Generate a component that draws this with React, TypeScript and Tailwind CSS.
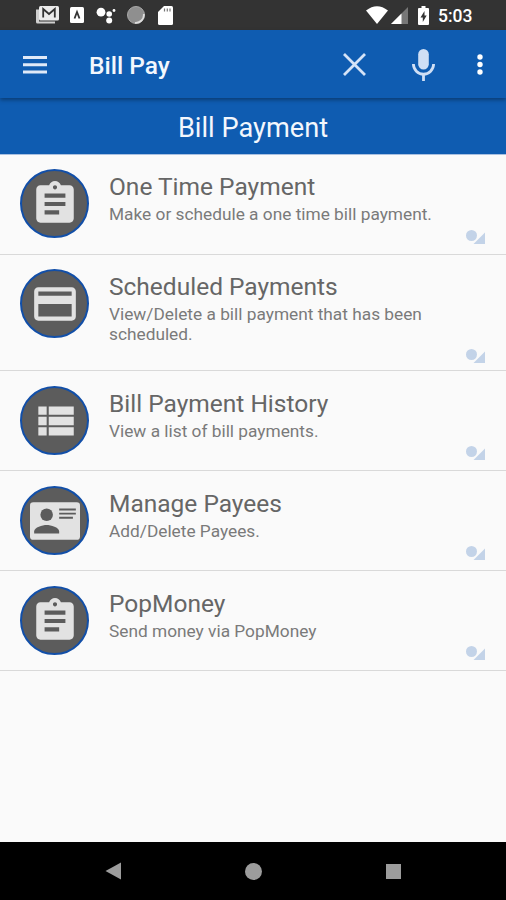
import React from 'react'

const AssignmentIcon = () => (
  <path d="M19 3h-4.18C14.4 1.84 13.3 1 12 1s-2.4.84-2.82 2H5c-1.1 0-2 .9-2 2v14c0 1.1.9 2 2 2h14c1.1 0 2-.9 2-2V5c0-1.1-.9-2-2-2zm-7 0c.55 0 1 .45 1 1s-.45 1-1 1-1-.45-1-1 .45-1 1-1zm2 14H7v-2h7v2zm3-4H7v-2h10v2zm0-4H7V7h10v2z" />
)

const CardIcon = () => (
  <path d="M20 4H4c-1.11 0-2 .89-2 2v12c0 1.11.89 2 2 2h16c1.11 0 2-.89 2-2V6c0-1.11-.89-2-2-2zm0 14H4v-6h16v6zm0-10H4V6h16v2z" />
)

const ListIcon = () => (
  <path d="M4 14h4v-4H4v4zm0 5h4v-4H4v4zM4 9h4V5H4v4zm5 5h12v-4H9v4zm0 5h12v-4H9v4zM9 5v4h12V5H9z" />
)

const ContactIcon = () => (
  <>
    <rect x="0" y="3" width="24" height="18" rx="1.6" />
    <g fill="#5c5c5c">
      <circle cx="8" cy="9" r="3" />
      <path d="M14 18H2v-1c0-2 4-3.1 6-3.1s6 1.1 6 3.1v1z" />
      <path d="M14 6h8v.9h-8zM14 8h8v.9h-8zM14 10h6.6v.9H14z" />
    </g>
  </>
)

const items = [
  {
    icon: <AssignmentIcon />,
    title: 'One Time Payment',
    text: 'Make or schedule a one time bill payment.',
    row: 'h-[100px] pt-[14px]',
    badge: 'bottom-[10px]',
  },
  {
    icon: <CardIcon />,
    title: 'Scheduled Payments',
    text: 'View/Delete a bill payment that has been scheduled.',
    row: 'h-[116px] pt-[14px]',
    badge: 'bottom-[7px]',
  },
  {
    icon: <ListIcon />,
    title: 'Bill Payment History',
    text: 'View a list of bill payments.',
    row: 'h-[100px] pt-[15px]',
    badge: 'bottom-[10px]',
  },
  {
    icon: <ContactIcon />,
    title: 'Manage Payees',
    text: 'Add/Delete Payees.',
    row: 'h-[100px] pt-[15px]',
    badge: 'bottom-[10px]',
  },
  {
    icon: <AssignmentIcon />,
    title: 'PopMoney',
    text: 'Send money via PopMoney',
    row: 'h-[100px] pt-[15px]',
    badge: 'bottom-[10px]',
  },
]

const StatusBar = () => (
  <div className="flex h-[30px] items-center bg-[#333333] pl-[35px] pr-[33px] text-white">
    {/* Notifications */}
    <svg className="h-5 w-6" viewBox="0 0 24 20">
      <path d="M1 4.500h3v12h16v2H2.500A1.500 1.500 0 0 1 1 17z" fill="#cfcfcf" />
      <rect x="4" y="1" width="20" height="14.500" rx="1.500" fill="#ececec" />
      <path d="M8.200 12.500V4l5.800 5 5.800-5v8.500" fill="none" stroke="#333" strokeWidth="1.800" />
    </svg>
    <svg className="ml-[11px] h-4 w-[14px]" viewBox="0 0 14 16">
      <rect width="14" height="16" rx="1.500" fill="#fff" />
      <path d="M4.500 11.500L7 5l2.500 6.500" fill="none" stroke="#333" strokeWidth="1.800" />
    </svg>
    <svg className="ml-[12px] h-5 w-5" viewBox="0 0 20 20" fill="#fff">
      <circle cx="5" cy="7.200" r="4.400" />
      <circle cx="13.200" cy="9" r="2.800" />
      <circle cx="13.200" cy="15.500" r="3" />
      <circle cx="18" cy="5.500" r="1.400" />
    </svg>
    <svg className="ml-[11px] h-[18px] w-[18px]" viewBox="0 0 18 18">
      <circle cx="9" cy="9" r="8.500" fill="#8f8f8f" stroke="#a8a8a8" />
      <path d="M16.800 8A8 8 0 0 1 8 16.800" fill="none" stroke="#ddd" strokeWidth="1.800" />
    </svg>
    <svg className="ml-[13px] h-[19px] w-[15px]" viewBox="0 0 15 19">
      <path d="M6 0h7.500A1.500 1.500 0 0 1 15 1.500v16a1.500 1.500 0 0 1-1.500 1.500h-12A1.500 1.500 0 0 1 0 17.500V6z" fill="#fff" />
      <path d="M6.500 2.500v3M9.300 2.500v3M12 2.500v3" stroke="#777" strokeWidth="1.200" />
    </svg>

    {/* System */}
    <svg className="ml-auto h-[18px] w-[22px]" viewBox="0 0 22 18">
      <path d="M0 4.500Q11-4 22 4.500L11 18z" fill="#fff" />
    </svg>
    <svg className="ml-[3px] h-[17px] w-[17px]" viewBox="0 0 17 17">
      <path d="M17 0v17H0z" fill="#777" />
      <path d="M10.500 6.500V17H0z" fill="#fff" />
    </svg>
    <svg className="ml-[10px] h-[19px] w-[11px]" viewBox="0 0 11 19">
      <path d="M3.500 0h4v2H10a1 1 0 0 1 1 1v15a1 1 0 0 1-1 1H1a1 1 0 0 1-1-1V3a1 1 0 0 1 1-1h2.500z" fill="#fff" />
      <path d="M6.500 5L2.500 11.500h2.300V16l3.900-6.500H6.500z" fill="#333" />
    </svg>
    <span className="ml-[9px] w-[35px] whitespace-nowrap pt-[3px] text-[17.5px] font-medium leading-none">5:03</span>
  </div>
)

const AppBar = () => (
  <header className="relative z-10 flex h-[68px] items-center bg-[#0f5cb1] pl-[23px] pr-[23px] pt-[1px] shadow-[0_2px_4px_rgba(0,0,0,0.35)]">
    <svg className="h-[18px] w-6" viewBox="0 0 24 18" fill="#dfe9f8">
      <path d="M0 0h24v3H0zM0 7.200h24v3H0zM0 14.500h24v3H0z" />
    </svg>
    <h1 className="ml-[42px] pt-[4px] text-[24.5px] font-medium leading-none text-[#f3f7fd]">Bill Pay</h1>
    <svg className="ml-auto h-[23px] w-[23px]" viewBox="0 0 23 23">
      <path d="M1 1l21 21M22 1L1 22" stroke="#d5e3f7" strokeWidth="2.800" />
    </svg>
    <svg className="ml-[46px] h-8 w-[23px]" viewBox="0 0 23 32">
      <rect x="6.200" y="0" width="10.600" height="20.500" rx="5.300" fill="#cfdff5" />
      <path d="M1.400 15a10.100 10.100 0 0 0 20.200 0M11.500 25v7" fill="none" stroke="#cfdff5" strokeWidth="2.800" />
    </svg>
    <svg className="ml-[42px] h-[21px] w-[6px]" viewBox="0 0 6 21" fill="#fff">
      <circle cx="3" cy="3" r="2.700" />
      <circle cx="3" cy="10.500" r="2.700" />
      <circle cx="3" cy="18" r="2.700" />
    </svg>
  </header>
)

const App = () => {
  return (
    <div className="flex h-[900px] w-[506px] flex-col overflow-hidden bg-[#fafafa] font-['Roboto',sans-serif]">
      <StatusBar />
      <AppBar />
      <div className="flex h-[57px] items-center justify-center border-b border-[#a9c0e0] bg-[#0f5cb1] pt-[6px]">
        <h2 className="text-[27.200px] leading-none text-[#f3f7fd]">Bill Payment</h2>
      </div>

      {/* Menu */}
      <ul>
        {items.map((item) => (
          <li key={item.title} className={`relative flex border-b border-[#d9d9d9] pl-5 ${item.row}`}>
            <div className="flex size-[69px] shrink-0 items-center justify-center rounded-full border-[2.5px] border-[#124fa8] bg-[#5c5c5c]">
              <svg className="size-[50px] shrink-0" viewBox="0 0 24 24" fill="#e2e2e2">
                {item.icon}
              </svg>
            </div>
            <div className="ml-5 w-[340px] pt-[3px]">
              <h3 className="text-[24.5px] leading-[30px] text-[#666666]">{item.title}</h3>
              <p className="mt-[2px] text-[17.3px] leading-5 text-[#7a7a7a]">{item.text}</p>
            </div>
            <svg className={`absolute right-5 h-[14px] w-5 ${item.badge}`} viewBox="0 0 20 14" fill="#c3d3e8">
              <circle cx="5.500" cy="5.500" r="5.500" />
              <path d="M19 2.500V14H7.500z" />
            </svg>
          </li>
        ))}
      </ul>

      {/* Navigation */}
      <nav className="mt-auto flex h-[58px] items-center bg-black pl-[105px]">
        <svg className="h-[18px] w-4" viewBox="0 0 16 18" fill="#9c9c9c">
          <path d="M16 0.500v17L0.500 9z" />
        </svg>
        <div className="ml-[124px] size-[17px] rounded-full bg-[#9c9c9c]" />
        <div className="ml-[124px] size-[15px] bg-[#9c9c9c]" />
      </nav>
    </div>
  )
}

export default App
